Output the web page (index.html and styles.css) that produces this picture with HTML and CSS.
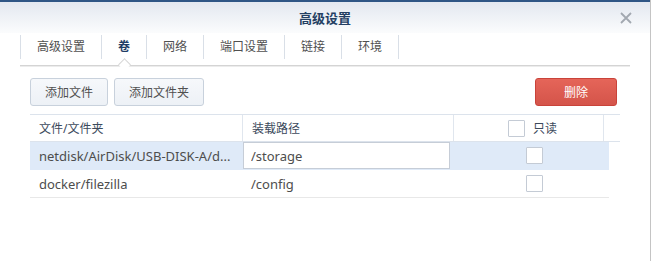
FILE: index.html
```html
<!DOCTYPE html>
<html lang="zh-CN">
<head>
  <meta charset="UTF-8">
  <meta name="viewport" content="width=device-width, initial-scale=1.0">
  <title>高级设置</title>
  <link rel="stylesheet" href="styles.css">
</head>
<body>
  <div class="window">
    <div class="topbar"></div>
    <header class="head">
      <h1 class="title">高级设置</h1>
      <button class="close" type="button" aria-label="关闭">
        <svg width="12" height="12" viewBox="0 0 12 12"><path d="M1 1 L11 11 M11 1 L1 11" stroke="#a2a8b0" stroke-width="1.8" fill="none"/></svg>
      </button>
    </header>

    <nav class="tabs">
      <a class="tab">高级设置</a>
      <a class="tab is-active">卷</a>
      <a class="tab">网络</a>
      <a class="tab">端口设置</a>
      <a class="tab">链接</a>
      <a class="tab">环境</a>
    </nav>

    <div class="panel">
      <div class="toolbar">
        <button class="btn" type="button">添加文件</button>
        <button class="btn" type="button">添加文件夹</button>
        <button class="btn btn-danger" type="button">删除</button>
      </div>

      <div class="grid">
        <div class="grid-head">
          <div class="cell col-file">文件/文件夹</div>
          <div class="cell col-mount">装载路径</div>
          <div class="cell col-ro"><span class="check"></span>只读</div>
          <div class="cell col-pad"></div>
        </div>
        <div class="grid-row is-selected">
          <div class="cell col-file" title="netdisk/AirDisk/USB-DISK-A/docker/filezilla"><span class="nowrap">netdisk/AirDisk/USB-DISK-A/d...</span></div>
          <div class="cell col-mount"><input class="path-input" type="text" value="/storage"></div>
          <div class="cell col-ro"><span class="check"></span></div>
        </div>
        <div class="grid-row">
          <div class="cell col-file"><span class="nowrap">docker/filezilla</span></div>
          <div class="cell col-mount"><span class="path">/config</span></div>
          <div class="cell col-ro"><span class="check"></span></div>
        </div>
      </div>
    </div>
  </div>
</body>
</html>
```

FILE: styles.css
```css
* {
  box-sizing: border-box;
}

body {
  margin: 0;
  font-family: "Noto Sans", "Noto Sans CJK SC", sans-serif;
  font-size: 12px;
  color: #505050;
  background: #fff;
}

.window {
  width: 651px;
  min-height: 100vh;
  border-right: 1px solid #c4c4c4;
  background: #fff;
}

.topbar {
  height: 2px;
  background: #2f5685;
}

.head {
  height: 31px;
  display: grid;
  grid-template-columns: 1fr auto 1fr;
  align-items: center;
  background: linear-gradient(#e3e8f0, #fbfcfd);
}

.title {
  grid-column: 2;
  margin: 0;
  font-size: 13px;
  line-height: 16px;
  font-weight: bold;
  color: #243f63;
}

.close {
  grid-column: 3;
  justify-self: end;
  display: block;
  width: 12px;
  height: 12px;
  margin-right: 18px;
  padding: 0;
  border: 0;
  background: none;
  cursor: pointer;
}

.close svg {
  display: block;
}

.tabs {
  display: flex;
  margin: 2px 20px 0;
  padding-bottom: 6px;
  border-bottom: 1px solid #d4d4d4;
  box-shadow: 0 1px 0 #ececec;
}

.tab {
  position: relative;
  height: 24px;
  line-height: 24px;
  padding: 0 16px;
  border-left: 1px solid #d9dfe7;
  color: #505050;
  cursor: pointer;
}

.tab:last-child {
  border-right: 1px solid #d9dfe7;
}

.tab.is-active {
  color: #1f3d66;
  font-weight: bold;
}

.tab.is-active::after {
  content: "";
  position: absolute;
  left: 50%;
  bottom: -10px;
  width: 8px;
  height: 8px;
  margin-left: -4px;
  background: #fff;
  border-top: 1px solid #d4d4d4;
  border-left: 1px solid #d4d4d4;
  transform: rotate(45deg);
}

.panel {
  padding: 12px 30px 0;
}

.toolbar {
  display: flex;
  gap: 6px;
}

.btn {
  height: 28px;
  padding: 0 14px;
  border: 1px solid #c8d1dc;
  border-radius: 3px;
  background: linear-gradient(#f6f8fb, #edf1f6);
  font: inherit;
  color: #505050;
  cursor: pointer;
}

.btn-danger {
  width: 82px;
  margin-left: auto;
  margin-right: 3px;
  border-color: #c9433a;
  background: linear-gradient(#e56559, #d4544a);
  color: #fff;
}

.grid {
  margin-top: 8px;
}

.grid-head,
.grid-row {
  display: flex;
  height: 28px;
}

.grid-head {
  width: 590px;
  border-top: 1px solid #dce3ec;
  border-bottom: 1px solid #dce3ec;
  color: #3c4a5c;
}

.grid-row {
  width: 579px;
  border-bottom: 1px solid transparent;
  font-size: 13px;
  color: #4d4d4d;
}

.grid-row:last-child {
  border-bottom-color: #e8e8e8;
}

.grid-row.is-selected {
  background: #dfeaf8;
}

.cell {
  display: flex;
  align-items: center;
  min-width: 0;
}

.col-file {
  width: 212px;
  padding: 0 9px;
}

.col-mount {
  width: 211px;
  padding-left: 9px;
}

.col-ro {
  width: 150px;
  padding-left: 54px;
  gap: 8px;
}

.col-pad {
  flex: 1;
}

.grid-head .col-mount,
.grid-head .col-ro,
.grid-head .col-pad {
  border-left: 1px solid #e0e6ee;
}

.grid-row .col-mount {
  padding-left: 1px;
}

.grid-row .col-ro {
  padding-left: 73px;
}

.nowrap {
  white-space: nowrap;
}

.path {
  padding-left: 8px;
}

.path-input {
  width: 207px;
  height: 27px;
  margin: 0;
  padding: 0 7px;
  border: 1px solid #c6cdd7;
  border-radius: 0;
  background: #fff;
  font: inherit;
  color: #4d4d4d;
  align-self: flex-start;
}

.check {
  display: block;
  width: 17px;
  height: 17px;
  border: 1px solid #c4cbd5;
  border-radius: 1px;
  background: #fff;
}
```
